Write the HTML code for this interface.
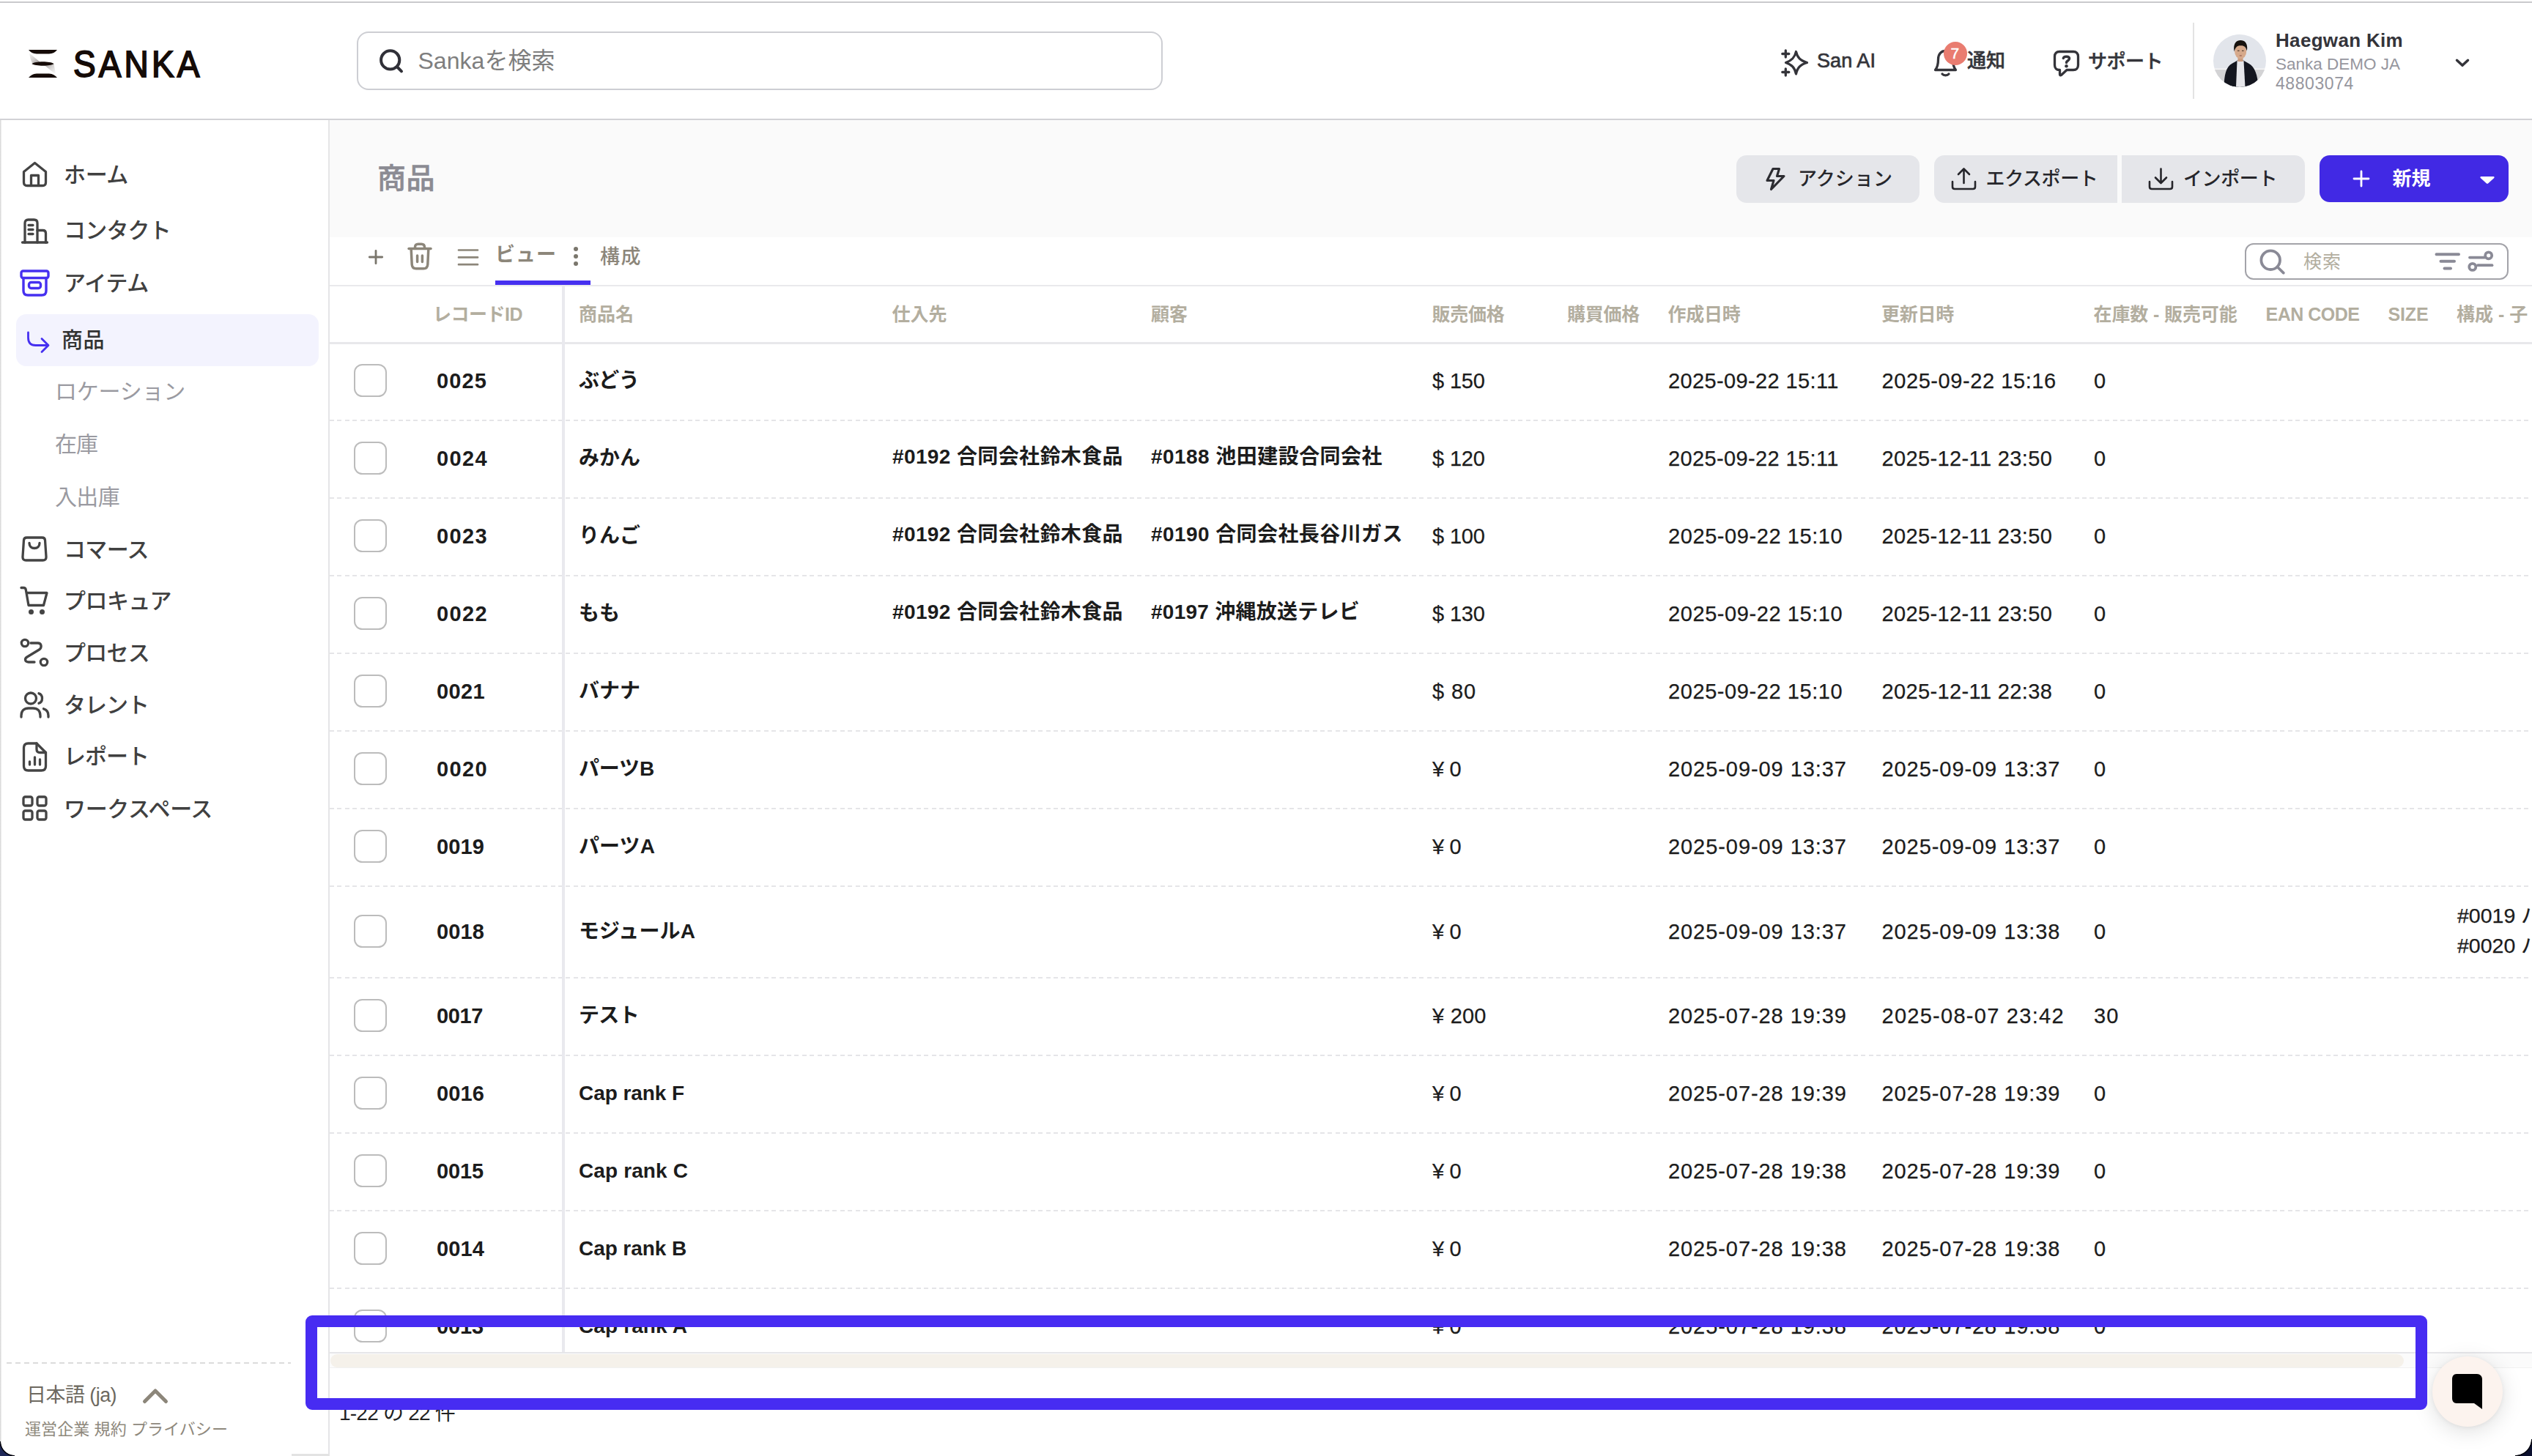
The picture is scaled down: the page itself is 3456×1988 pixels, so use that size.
<!DOCTYPE html>
<html lang="ja"><head><meta charset="utf-8"><title>商品 - Sanka</title>
<style>
html,body{margin:0;padding:0;}
body{width:3456px;height:1988px;position:relative;overflow:hidden;background:#fff;font-family:"Liberation Sans", "Noto Sans CJK JP", sans-serif;}
.b{position:absolute;box-sizing:border-box;}
.t{position:absolute;white-space:nowrap;line-height:1;}
svg{overflow:visible;}
</style></head><body>
<div class="b" style="left:0px;top:2px;width:3456px;height:2px;background:#c9c9cc;"></div>
<div class="b" style="left:450px;top:164px;width:3006px;height:160px;background:#fafafa;"></div>
<div class="b" style="left:0px;top:162px;width:3456px;height:2px;background:#d2d2d6;"></div>
<div class="b" style="left:448px;top:164px;width:2px;height:1824px;background:#e5e5e7;"></div>
<div class="b" style="left:0px;top:164px;width:2px;height:1824px;background:linear-gradient(90deg,#d4d4d4,#f2f2f2);"></div>
<svg class="b" style="left:39px;top:68px;" width="39" height="38" viewBox="0 0 39 38">
<defs><linearGradient id="lg1" x1="0" y1="0" x2="1" y2="1"><stop offset="0" stop-color="#f4f3f2"/><stop offset=".55" stop-color="#cfcccb"/><stop offset="1" stop-color="#8f8b89"/></linearGradient>
<linearGradient id="lg2" x1="0" y1="0" x2="1" y2="1"><stop offset="0" stop-color="#9f9b99"/><stop offset=".5" stop-color="#d9d7d6"/><stop offset="1" stop-color="#fbfbfb"/></linearGradient></defs>
<path d="M1 4.5 L16 17 L5 18.5 L2.5 12 Z" fill="url(#lg1)"/>
<path d="M21 20.5 L34.5 19.5 L37 32.5 L35 32 Z" fill="url(#lg2)"/>
<path d="M0 0 H39 C36.5 3.2 33 5.4 28 5.6 H11 C6 5.4 2.5 3.2 0 0Z" fill="#150b07"/>
<path d="M4.3 19 C10 15.2 29 15.2 34.7 19 C29 22.6 10 22.6 4.3 19Z" fill="#150b07"/>
<path d="M0 38 H39 C36.5 34.8 33 32.6 28 32.4 H11 C6 32.6 2.5 34.8 0 38Z" fill="#150b07"/>
</svg>
<div class="t" style="left:100px;top:63.0px;font-size:49.5px;color:#150b07;-webkit-text-stroke:1.8px #150b07;transform:scaleX(.93);transform-origin:0 50%;letter-spacing:4.4px;">SANKA</div>
<div class="b" style="left:487px;top:43px;width:1100px;height:80px;border:2px solid #cdced3;border-radius:16px;background:#fff;"></div>
<svg class="b" style="left:516px;top:66px;" width="36" height="36" viewBox="0 0 36 36"><circle cx="16.7" cy="15.9" r="12.6" fill="none" stroke="#303038" stroke-width="4"/><path d="M25.8 25 L32 31.3" stroke="#303038" stroke-width="4" stroke-linecap="round"/></svg>
<div class="t" style="left:570.5px;top:67.0px;font-size:32px;color:#7e7e7e;letter-spacing:0.03px;">Sankaを検索</div>
<svg class="b" style="left:2432px;top:66px;" width="38" height="40" viewBox="0 0 38 40"><g fill="none" stroke="#34343a" stroke-width="3.3" stroke-linecap="round" stroke-linejoin="round">
<path d="M19.5 4.5 C21.3 12.5 25 16.7 34.5 19.5 C25 22.3 21.3 26.5 19.5 35 C17.7 26.5 14 22.3 5.5 19.5 C14 16.7 17.7 12.5 19.5 4.5Z"/>
<path d="M5.3 3 V12 M.8 7.5 H9.8"/><path d="M5.3 28 V37 M.8 32.5 H9.8"/></g></svg>
<div class="t" style="left:2480px;top:70.0px;font-size:27px;font-weight:500;color:#34343a;letter-spacing:0.07px;-webkit-text-stroke:.7px #34343a;">San AI</div>
<svg class="b" style="left:2638px;top:66px;" width="36" height="40" viewBox="0 0 36 40"><g fill="none" stroke="#34343a" stroke-width="3.3" stroke-linecap="round" stroke-linejoin="round">
<path d="M3.5 29.5 C6.5 26 7.5 23 7.5 15 C7.5 7.5 12 3.5 17.5 3.5 C23 3.5 27.5 7.5 27.5 15 C27.5 23 28.5 26 31.5 29.5 Z"/>
<path d="M13 35 C15 37.5 20 37.5 22 35"/></g></svg>
<div class="b" style="left:2652.5px;top:56.5px;width:32px;height:32px;border-radius:50%;background:#e97c70;"></div>
<div class="t" style="left:2662.5px;top:62.0px;font-size:21px;color:#fff;-webkit-text-stroke:.5px #fff;">7</div>
<div class="t" style="left:2685px;top:70.0px;font-size:26px;font-weight:500;color:#34343a;letter-spacing:-0.01px;-webkit-text-stroke:.5px #34343a;">通知</div>
<svg class="b" style="left:2802px;top:68px;" width="37" height="38" viewBox="0 0 37 38"><g fill="none" stroke="#34343a" stroke-width="3.3" stroke-linecap="round" stroke-linejoin="round">
<path d="M9 2.5 H28 C32 2.5 34.5 5 34.5 9 V21 C34.5 25 32 27.5 28 27.5 H19 L11.5 34.5 C10.5 35.3 9.5 34.8 9.5 33.5 V27.5 H9 C5 27.5 2.5 25 2.5 21 V9 C2.5 5 5 2.5 9 2.5Z"/>
<path d="M14.3 11.5 C14.8 8.5 22.5 8 22.5 12 C22.5 15 18.5 14.8 18.5 17.4" stroke-width="3.5"/></g><circle cx="18.5" cy="22.3" r="2.3" fill="#34343a"/></svg>
<div class="t" style="left:2850px;top:70.5px;font-size:26px;font-weight:500;color:#34343a;letter-spacing:-0.50px;-webkit-text-stroke:.5px #34343a;">サポート</div>
<div class="b" style="left:2993px;top:31px;width:2px;height:104px;background:#e3e3e3;"></div>
<svg class="b" style="left:3021px;top:47px;" width="72" height="72" viewBox="0 0 72 72"><defs><clipPath id="av"><circle cx="36" cy="36" r="36"/></clipPath></defs>
<g clip-path="url(#av)"><rect width="72" height="72" fill="#e2e5eb"/><rect y="48" width="72" height="24" fill="#d3d3d5"/><rect y="46.5" width="72" height="1.6" fill="#f6f6f6"/>
<path d="M14.5 72 C15 56 17 44 26 39.5 L33 35.5 H41 L48 39.5 C57 44 60.5 56 61.5 72Z" fill="#14161f"/>
<path d="M32.5 36 H41.5 L43.5 72 H31Z" fill="#e6e6ea"/>
<rect x="33.5" y="29" width="7" height="8" fill="#c99a7d"/>
<ellipse cx="37.2" cy="23.5" rx="8" ry="10" fill="#d6a98b"/>
<path d="M28.6 23.5 C26.5 13 31.5 7.5 37.5 8 C44 8 47.5 13.5 45.8 22.5 C44.5 17.5 42 15 37.5 15.3 C33 15 30 17.5 28.6 23.5Z" fill="#17130f"/>
<path d="M33 22.3 H35.6 M39 22.3 H41.6" stroke="#3a2a22" stroke-width="1"/><path d="M35.8 29 H38.8" stroke="#8a4f45" stroke-width="1.2"/>
</g></svg>
<div class="t" style="left:3106px;top:42.0px;font-size:26px;font-weight:700;color:#34343a;letter-spacing:0.32px;">Haegwan Kim</div>
<div class="t" style="left:3106px;top:77.3px;font-size:22.5px;color:#96969e;">Sanka DEMO JA</div>
<div class="t" style="left:3106px;top:103.2px;font-size:23px;color:#96969e;letter-spacing:0.58px;">48803074</div>
<svg class="b" style="left:3351px;top:79px;" width="20" height="14" viewBox="0 0 24 16"><path d="M3 3.5 L12 12 L21 3.5" fill="none" stroke="#34343a" stroke-width="4.2" stroke-linecap="round" stroke-linejoin="round"/></svg>
<div class="t" style="left:515px;top:223.5px;font-size:39px;font-weight:500;color:#8b8b93;letter-spacing:0.49px;-webkit-text-stroke:.6px #8b8b93;">商品</div>
<div class="b" style="left:2370px;top:212px;width:250px;height:65px;background:#e5e6ea;border-radius:14px;"></div>
<svg class="b" style="left:2409px;top:228px;" width="29" height="33" viewBox="0 0 29 33"><path d="M11 2.5 H19.5 L16.5 12.5 H26 L8.5 30.5 L12 18.5 H3 Z" fill="none" stroke="#2c2c31" stroke-width="3.1" stroke-linejoin="round"/></svg>
<div class="t" style="left:2454px;top:231.0px;font-size:26px;font-weight:500;color:#26262b;letter-spacing:0.06px;">アクション</div>
<div class="b" style="left:2640px;top:212px;width:250px;height:65px;background:#e5e6ea;border-radius:14px 0 0 14px;"></div>
<svg class="b" style="left:2663px;top:228px;" width="35" height="32" viewBox="0 0 35 32"><g fill="none" stroke="#26262b" stroke-width="2.6" stroke-linecap="round" stroke-linejoin="round"><path d="M2 20 V27 C2 28.7 3.3 30 5 30 H30 C31.7 30 33 28.7 33 27 V20"/><path d="M17.5 22 V3 M10 10 L17.5 2.5 L25 10"/></g></svg>
<div class="t" style="left:2710.5px;top:231.0px;font-size:26px;font-weight:500;color:#26262b;letter-spacing:-0.37px;">エクスポート</div>
<div class="b" style="left:2896px;top:212px;width:250px;height:65px;background:#e5e6ea;border-radius:0 14px 14px 0;"></div>
<svg class="b" style="left:2932px;top:228px;" width="35" height="32" viewBox="0 0 35 32"><g fill="none" stroke="#26262b" stroke-width="2.6" stroke-linecap="round" stroke-linejoin="round"><path d="M2 20 V27 C2 28.7 3.3 30 5 30 H30 C31.7 30 33 28.7 33 27 V20"/><path d="M17.5 2.5 V21.5 M10 14.5 L17.5 22 L25 14.5"/></g></svg>
<div class="t" style="left:2980px;top:231.0px;font-size:26px;font-weight:500;color:#26262b;letter-spacing:-0.40px;">インポート</div>
<div class="b" style="left:3166px;top:212px;width:258px;height:64px;background:#4129e4;border-radius:14px;"></div>
<svg class="b" style="left:3212px;top:233px;" width="22" height="22" viewBox="0 0 22 22"><path d="M11 1 V21 M1 11 H21" stroke="#fff" stroke-width="2.8" stroke-linecap="round"/></svg>
<div class="t" style="left:3265.5px;top:231.0px;font-size:26px;font-weight:700;color:#fff;letter-spacing:-0.01px;">新規</div>
<svg class="b" style="left:3384px;top:239px;" width="22" height="13" viewBox="0 0 22 12"><path d="M2.5 1.5 H19.5 C20.6 1.5 21 2.6 20.3 3.4 L12.3 10.8 C11.6 11.5 10.4 11.5 9.7 10.8 L1.7 3.4 C1 2.6 1.4 1.5 2.5 1.5Z" fill="#fff"/></svg>
<svg class="b" style="left:502px;top:340px;" width="22" height="22" viewBox="0 0 22 22"><path d="M11 2.3 V19.7 M2.3 11 H19.7" stroke="#7a766c" stroke-width="2.8" stroke-linecap="round"/></svg>
<svg class="b" style="left:556px;top:331px;" width="34" height="38" viewBox="0 0 34 38"><g fill="none" stroke="#8c867a" stroke-width="3.5" stroke-linecap="round" stroke-linejoin="round">
<path d="M2 8.5 H32"/><path d="M10.5 8 V6.5 C10.5 3.8 12 2.2 14.8 2.2 H19.2 C22 2.2 23.5 3.8 23.5 6.5 V8"/>
<path d="M5.2 9 L6.2 30 C6.4 33.8 8.3 35.8 12 35.8 H22 C25.7 35.8 27.6 33.8 27.8 30 L28.8 9"/><path d="M13.6 18 V26.5 M20.4 18 V26.5"/></g></svg>
<svg class="b" style="left:625px;top:340px;" width="28" height="23" viewBox="0 0 28 23"><path d="M1 1.5 H27 M1 11.4 H27 M1 21.2 H27" stroke="#8c867a" stroke-width="2.7" stroke-linecap="round"/></svg>
<div class="t" style="left:676px;top:334.8px;font-size:27px;font-weight:700;color:#8c867a;letter-spacing:1.00px;">ビュー</div>
<div class="b" style="left:783px;top:337px;width:6px;height:6px;border-radius:50%;background:#7a766c;"></div>
<div class="b" style="left:783px;top:347.2px;width:6px;height:6px;border-radius:50%;background:#7a766c;"></div>
<div class="b" style="left:783px;top:357.4px;width:6px;height:6px;border-radius:50%;background:#7a766c;"></div>
<div class="t" style="left:819px;top:337.8px;font-size:27px;font-weight:500;color:#8c867a;letter-spacing:1.50px;">構成</div>
<div class="b" style="left:676px;top:383px;width:130px;height:6px;background:#4630f0;"></div>
<div class="b" style="left:450px;top:389px;width:3006px;height:2px;background:#e9e9ec;"></div>
<div class="b" style="left:3064px;top:332px;width:360px;height:50px;border:2px solid #a3a3a9;border-radius:12px;background:#fff;"></div>
<svg class="b" style="left:3084px;top:340px;" width="36" height="36" viewBox="0 0 36 36"><circle cx="15.2" cy="15.2" r="12.8" fill="none" stroke="#8a8a96" stroke-width="3.8"/><path d="M24.5 24.5 L32.8 32.6" stroke="#8a8a96" stroke-width="3.8" stroke-linecap="round"/></svg>
<div class="t" style="left:3144px;top:344.5px;font-size:25px;color:#b3ae9f;letter-spacing:0.99px;">検索</div>
<svg class="b" style="left:3323px;top:343px;" width="36" height="28" viewBox="0 0 36 28"><path d="M2.5 4.2 H33 M8.5 13.8 H27 M13.5 23.5 H22" stroke="#8a8a96" stroke-width="4" stroke-linecap="round"/></svg>
<svg class="b" style="left:3368px;top:341px;" width="36" height="30" viewBox="0 0 36 30"><g fill="none" stroke="#8a8a96" stroke-width="3.8" stroke-linecap="round"><path d="M3 10.6 H23.5"/><circle cx="28.7" cy="7.8" r="4.5"/><path d="M14 21.2 H33.5"/><circle cx="6.8" cy="23.4" r="4.5"/></g></svg>
<div class="b" style="left:450px;top:391px;width:3006px;height:1456px;background:#fff;"></div>
<div class="t" style="left:591px;top:416.5px;font-size:25px;font-weight:700;color:#b3ae9f;letter-spacing:-0.50px;">レコードID</div>
<div class="t" style="left:790px;top:416.5px;font-size:25px;font-weight:700;color:#b3ae9f;letter-spacing:-0.01px;">商品名</div>
<div class="t" style="left:1217.5px;top:416.5px;font-size:25px;font-weight:700;color:#b3ae9f;letter-spacing:-0.01px;">仕入先</div>
<div class="t" style="left:1571px;top:416.5px;font-size:25px;font-weight:700;color:#b3ae9f;letter-spacing:-0.01px;">顧客</div>
<div class="t" style="left:1954.5px;top:416.5px;font-size:25px;font-weight:700;color:#b3ae9f;letter-spacing:-0.25px;">販売価格</div>
<div class="t" style="left:2139px;top:416.5px;font-size:25px;font-weight:700;color:#b3ae9f;letter-spacing:-0.25px;">購買価格</div>
<div class="t" style="left:2276.5px;top:416.5px;font-size:25px;font-weight:700;color:#b3ae9f;letter-spacing:-0.25px;">作成日時</div>
<div class="t" style="left:2568px;top:416.5px;font-size:25px;font-weight:700;color:#b3ae9f;letter-spacing:-0.25px;">更新日時</div>
<div class="t" style="left:2857.5px;top:416.5px;font-size:25px;font-weight:700;color:#b3ae9f;letter-spacing:-0.12px;">在庫数 - 販売可能</div>
<div class="t" style="left:3092.5px;top:416.5px;font-size:25px;font-weight:700;color:#b3ae9f;letter-spacing:-0.50px;">EAN CODE</div>
<div class="t" style="left:3259.5px;top:416.5px;font-size:25px;font-weight:700;color:#b3ae9f;letter-spacing:-0.14px;">SIZE</div>
<div class="t" style="left:3353px;top:416.5px;font-size:25px;font-weight:700;color:#b3ae9f;">構成 - 子</div>
<div class="b" style="left:450px;top:467px;width:3006px;height:3px;background:#e8e8eb;"></div>
<div class="b" style="left:450px;top:469px;width:3006px;height:1378px;overflow:hidden;"><div class="b" style="left:-450px;top:-469px;width:3456px;height:1988px;">
<div class="b" style="left:483px;top:497.0px;width:45px;height:45px;border:2px solid #bcbcbc;border-radius:11.5px;background:#fff;"></div>
<div class="t" style="left:596px;top:506.3px;font-size:29px;font-weight:700;color:#1c1c1c;letter-spacing:1.12px;">0025</div>
<div class="t" style="left:790px;top:506.2px;font-size:28px;font-weight:700;color:#1c1c1c;letter-spacing:-0.67px;">ぶどう</div>
<div class="t" style="left:1955px;top:506.0px;font-size:29px;color:#1c1c1c;letter-spacing:-0.15px;-webkit-text-stroke:.25px #1c1c1c;">$ 150</div>
<div class="t" style="left:2277px;top:506.0px;font-size:29px;color:#1c1c1c;letter-spacing:0.37px;-webkit-text-stroke:.25px #1c1c1c;">2025-09-22 15:11</div>
<div class="t" style="left:2568.5px;top:506.0px;font-size:29px;color:#1c1c1c;letter-spacing:0.58px;-webkit-text-stroke:.25px #1c1c1c;">2025-09-22 15:16</div>
<div class="t" style="left:2858px;top:506.0px;font-size:29px;color:#1c1c1c;letter-spacing:1.17px;-webkit-text-stroke:.25px #1c1c1c;">0</div>
<div class="b" style="left:450px;top:573px;width:3006px;height:2px;background:repeating-linear-gradient(90deg,#e5e5e8 0 6px,transparent 6px 10.4px);"></div>
<div class="b" style="left:483px;top:603.0px;width:45px;height:45px;border:2px solid #bcbcbc;border-radius:11.5px;background:#fff;"></div>
<div class="t" style="left:596px;top:612.3px;font-size:29px;font-weight:700;color:#1c1c1c;letter-spacing:1.37px;">0024</div>
<div class="t" style="left:790px;top:612.2px;font-size:28px;font-weight:700;color:#1c1c1c;">みかん</div>
<div class="t" style="left:1218px;top:609.5px;font-size:28px;font-weight:700;color:#1c1c1c;letter-spacing:0.38px;">#0192 合同会社鈴木食品</div>
<div class="t" style="left:1571px;top:609.5px;font-size:28px;font-weight:700;color:#1c1c1c;letter-spacing:0.45px;">#0188 池田建設合同会社</div>
<div class="t" style="left:1955px;top:612.0px;font-size:29px;color:#1c1c1c;letter-spacing:-0.15px;-webkit-text-stroke:.25px #1c1c1c;">$ 120</div>
<div class="t" style="left:2277px;top:612.0px;font-size:29px;color:#1c1c1c;letter-spacing:0.37px;-webkit-text-stroke:.25px #1c1c1c;">2025-09-22 15:11</div>
<div class="t" style="left:2568.5px;top:612.0px;font-size:29px;color:#1c1c1c;letter-spacing:0.37px;-webkit-text-stroke:.25px #1c1c1c;">2025-12-11 23:50</div>
<div class="t" style="left:2858px;top:612.0px;font-size:29px;color:#1c1c1c;letter-spacing:1.17px;-webkit-text-stroke:.25px #1c1c1c;">0</div>
<div class="b" style="left:450px;top:679px;width:3006px;height:2px;background:repeating-linear-gradient(90deg,#e5e5e8 0 6px,transparent 6px 10.4px);"></div>
<div class="b" style="left:483px;top:709.0px;width:45px;height:45px;border:2px solid #bcbcbc;border-radius:11.5px;background:#fff;"></div>
<div class="t" style="left:596px;top:718.3px;font-size:29px;font-weight:700;color:#1c1c1c;letter-spacing:1.37px;">0023</div>
<div class="t" style="left:790px;top:718.2px;font-size:28px;font-weight:700;color:#1c1c1c;">りんご</div>
<div class="t" style="left:1218px;top:715.5px;font-size:28px;font-weight:700;color:#1c1c1c;letter-spacing:0.38px;">#0192 合同会社鈴木食品</div>
<div class="t" style="left:1571px;top:715.5px;font-size:28px;font-weight:700;color:#1c1c1c;letter-spacing:0.42px;">#0190 合同会社長谷川ガス</div>
<div class="t" style="left:1955px;top:718.0px;font-size:29px;color:#1c1c1c;letter-spacing:-0.15px;-webkit-text-stroke:.25px #1c1c1c;">$ 100</div>
<div class="t" style="left:2277px;top:718.0px;font-size:29px;color:#1c1c1c;letter-spacing:0.58px;-webkit-text-stroke:.25px #1c1c1c;">2025-09-22 15:10</div>
<div class="t" style="left:2568.5px;top:718.0px;font-size:29px;color:#1c1c1c;letter-spacing:0.37px;-webkit-text-stroke:.25px #1c1c1c;">2025-12-11 23:50</div>
<div class="t" style="left:2858px;top:718.0px;font-size:29px;color:#1c1c1c;letter-spacing:1.17px;-webkit-text-stroke:.25px #1c1c1c;">0</div>
<div class="b" style="left:450px;top:785px;width:3006px;height:2px;background:repeating-linear-gradient(90deg,#e5e5e8 0 6px,transparent 6px 10.4px);"></div>
<div class="b" style="left:483px;top:815.0px;width:45px;height:45px;border:2px solid #bcbcbc;border-radius:11.5px;background:#fff;"></div>
<div class="t" style="left:596px;top:824.3px;font-size:29px;font-weight:700;color:#1c1c1c;letter-spacing:1.37px;">0022</div>
<div class="t" style="left:790px;top:824.2px;font-size:28px;font-weight:700;color:#1c1c1c;">もも</div>
<div class="t" style="left:1218px;top:821.5px;font-size:28px;font-weight:700;color:#1c1c1c;letter-spacing:0.38px;">#0192 合同会社鈴木食品</div>
<div class="t" style="left:1571px;top:821.5px;font-size:28px;font-weight:700;color:#1c1c1c;letter-spacing:0.26px;">#0197 沖縄放送テレビ</div>
<div class="t" style="left:1955px;top:824.0px;font-size:29px;color:#1c1c1c;letter-spacing:-0.15px;-webkit-text-stroke:.25px #1c1c1c;">$ 130</div>
<div class="t" style="left:2277px;top:824.0px;font-size:29px;color:#1c1c1c;letter-spacing:0.58px;-webkit-text-stroke:.25px #1c1c1c;">2025-09-22 15:10</div>
<div class="t" style="left:2568.5px;top:824.0px;font-size:29px;color:#1c1c1c;letter-spacing:0.37px;-webkit-text-stroke:.25px #1c1c1c;">2025-12-11 23:50</div>
<div class="t" style="left:2858px;top:824.0px;font-size:29px;color:#1c1c1c;letter-spacing:1.17px;-webkit-text-stroke:.25px #1c1c1c;">0</div>
<div class="b" style="left:450px;top:891px;width:3006px;height:2px;background:repeating-linear-gradient(90deg,#e5e5e8 0 6px,transparent 6px 10.4px);"></div>
<div class="b" style="left:483px;top:921.0px;width:45px;height:45px;border:2px solid #bcbcbc;border-radius:11.5px;background:#fff;"></div>
<div class="t" style="left:596px;top:930.3px;font-size:29px;font-weight:700;color:#1c1c1c;letter-spacing:0.37px;">0021</div>
<div class="t" style="left:790px;top:930.2px;font-size:28px;font-weight:700;color:#1c1c1c;">バナナ</div>
<div class="t" style="left:1955px;top:930.0px;font-size:29px;color:#1c1c1c;letter-spacing:0.91px;-webkit-text-stroke:.25px #1c1c1c;">$ 80</div>
<div class="t" style="left:2277px;top:930.0px;font-size:29px;color:#1c1c1c;letter-spacing:0.58px;-webkit-text-stroke:.25px #1c1c1c;">2025-09-22 15:10</div>
<div class="t" style="left:2568.5px;top:930.0px;font-size:29px;color:#1c1c1c;letter-spacing:0.37px;-webkit-text-stroke:.25px #1c1c1c;">2025-12-11 22:38</div>
<div class="t" style="left:2858px;top:930.0px;font-size:29px;color:#1c1c1c;letter-spacing:1.17px;-webkit-text-stroke:.25px #1c1c1c;">0</div>
<div class="b" style="left:450px;top:997px;width:3006px;height:2px;background:repeating-linear-gradient(90deg,#e5e5e8 0 6px,transparent 6px 10.4px);"></div>
<div class="b" style="left:483px;top:1027.0px;width:45px;height:45px;border:2px solid #bcbcbc;border-radius:11.5px;background:#fff;"></div>
<div class="t" style="left:596px;top:1036.3px;font-size:29px;font-weight:700;color:#1c1c1c;letter-spacing:1.37px;">0020</div>
<div class="t" style="left:790px;top:1036.2px;font-size:28px;font-weight:700;color:#1c1c1c;letter-spacing:-0.17px;">パーツB</div>
<div class="t" style="left:1955px;top:1036.0px;font-size:29px;color:#1c1c1c;letter-spacing:-0.39px;-webkit-text-stroke:.25px #1c1c1c;">¥ 0</div>
<div class="t" style="left:2277px;top:1036.0px;font-size:29px;color:#1c1c1c;letter-spacing:0.93px;-webkit-text-stroke:.25px #1c1c1c;">2025-09-09 13:37</div>
<div class="t" style="left:2568.5px;top:1036.0px;font-size:29px;color:#1c1c1c;letter-spacing:0.93px;-webkit-text-stroke:.25px #1c1c1c;">2025-09-09 13:37</div>
<div class="t" style="left:2858px;top:1036.0px;font-size:29px;color:#1c1c1c;letter-spacing:1.17px;-webkit-text-stroke:.25px #1c1c1c;">0</div>
<div class="b" style="left:450px;top:1103px;width:3006px;height:2px;background:repeating-linear-gradient(90deg,#e5e5e8 0 6px,transparent 6px 10.4px);"></div>
<div class="b" style="left:483px;top:1133.0px;width:45px;height:45px;border:2px solid #bcbcbc;border-radius:11.5px;background:#fff;"></div>
<div class="t" style="left:596px;top:1142.3px;font-size:29px;font-weight:700;color:#1c1c1c;letter-spacing:0.12px;">0019</div>
<div class="t" style="left:790px;top:1142.2px;font-size:28px;font-weight:700;color:#1c1c1c;letter-spacing:0.08px;">パーツA</div>
<div class="t" style="left:1955px;top:1142.0px;font-size:29px;color:#1c1c1c;letter-spacing:-0.39px;-webkit-text-stroke:.25px #1c1c1c;">¥ 0</div>
<div class="t" style="left:2277px;top:1142.0px;font-size:29px;color:#1c1c1c;letter-spacing:0.93px;-webkit-text-stroke:.25px #1c1c1c;">2025-09-09 13:37</div>
<div class="t" style="left:2568.5px;top:1142.0px;font-size:29px;color:#1c1c1c;letter-spacing:0.93px;-webkit-text-stroke:.25px #1c1c1c;">2025-09-09 13:37</div>
<div class="t" style="left:2858px;top:1142.0px;font-size:29px;color:#1c1c1c;letter-spacing:1.17px;-webkit-text-stroke:.25px #1c1c1c;">0</div>
<div class="b" style="left:450px;top:1209px;width:3006px;height:2px;background:repeating-linear-gradient(90deg,#e5e5e8 0 6px,transparent 6px 10.4px);"></div>
<div class="b" style="left:483px;top:1248.5px;width:45px;height:45px;border:2px solid #bcbcbc;border-radius:11.5px;background:#fff;"></div>
<div class="t" style="left:596px;top:1257.8px;font-size:29px;font-weight:700;color:#1c1c1c;letter-spacing:0.12px;">0018</div>
<div class="t" style="left:790px;top:1257.7px;font-size:28px;font-weight:700;color:#1c1c1c;letter-spacing:0.12px;">モジュールA</div>
<div class="t" style="left:1955px;top:1257.5px;font-size:29px;color:#1c1c1c;letter-spacing:-0.39px;-webkit-text-stroke:.25px #1c1c1c;">¥ 0</div>
<div class="t" style="left:2277px;top:1257.5px;font-size:29px;color:#1c1c1c;letter-spacing:0.93px;-webkit-text-stroke:.25px #1c1c1c;">2025-09-09 13:37</div>
<div class="t" style="left:2568.5px;top:1257.5px;font-size:29px;color:#1c1c1c;letter-spacing:0.93px;-webkit-text-stroke:.25px #1c1c1c;">2025-09-09 13:38</div>
<div class="t" style="left:2858px;top:1257.5px;font-size:29px;color:#1c1c1c;letter-spacing:1.17px;-webkit-text-stroke:.25px #1c1c1c;">0</div>
<div class="t" style="left:3354px;top:1236.0px;font-size:28.5px;color:#1c1c1c;-webkit-text-stroke:.25px #1c1c1c;">#0019 パーツA</div>
<div class="t" style="left:3354px;top:1277.0px;font-size:28.5px;color:#1c1c1c;-webkit-text-stroke:.25px #1c1c1c;">#0020 パーツB</div>
<div class="b" style="left:450px;top:1334px;width:3006px;height:2px;background:repeating-linear-gradient(90deg,#e5e5e8 0 6px,transparent 6px 10.4px);"></div>
<div class="b" style="left:483px;top:1364.0px;width:45px;height:45px;border:2px solid #bcbcbc;border-radius:11.5px;background:#fff;"></div>
<div class="t" style="left:596px;top:1373.3px;font-size:29px;font-weight:700;color:#1c1c1c;letter-spacing:-0.38px;">0017</div>
<div class="t" style="left:790px;top:1373.2px;font-size:28px;font-weight:700;color:#1c1c1c;letter-spacing:-0.67px;">テスト</div>
<div class="t" style="left:1955px;top:1373.0px;font-size:29px;color:#1c1c1c;letter-spacing:0.23px;-webkit-text-stroke:.25px #1c1c1c;">¥ 200</div>
<div class="t" style="left:2277px;top:1373.0px;font-size:29px;color:#1c1c1c;letter-spacing:0.93px;-webkit-text-stroke:.25px #1c1c1c;">2025-07-28 19:39</div>
<div class="t" style="left:2568.5px;top:1373.0px;font-size:29px;color:#1c1c1c;letter-spacing:1.27px;-webkit-text-stroke:.25px #1c1c1c;">2025-08-07 23:42</div>
<div class="t" style="left:2858px;top:1373.0px;font-size:29px;color:#1c1c1c;letter-spacing:1.17px;-webkit-text-stroke:.25px #1c1c1c;">30</div>
<div class="b" style="left:450px;top:1440px;width:3006px;height:2px;background:repeating-linear-gradient(90deg,#e5e5e8 0 6px,transparent 6px 10.4px);"></div>
<div class="b" style="left:483px;top:1470.0px;width:45px;height:45px;border:2px solid #bcbcbc;border-radius:11.5px;background:#fff;"></div>
<div class="t" style="left:596px;top:1479.3px;font-size:29px;font-weight:700;color:#1c1c1c;letter-spacing:0.12px;">0016</div>
<div class="t" style="left:790px;top:1479.2px;font-size:28px;font-weight:700;color:#1c1c1c;letter-spacing:-0.07px;">Cap rank F</div>
<div class="t" style="left:1955px;top:1479.0px;font-size:29px;color:#1c1c1c;letter-spacing:-0.39px;-webkit-text-stroke:.25px #1c1c1c;">¥ 0</div>
<div class="t" style="left:2277px;top:1479.0px;font-size:29px;color:#1c1c1c;letter-spacing:0.93px;-webkit-text-stroke:.25px #1c1c1c;">2025-07-28 19:39</div>
<div class="t" style="left:2568.5px;top:1479.0px;font-size:29px;color:#1c1c1c;letter-spacing:0.93px;-webkit-text-stroke:.25px #1c1c1c;">2025-07-28 19:39</div>
<div class="t" style="left:2858px;top:1479.0px;font-size:29px;color:#1c1c1c;letter-spacing:1.17px;-webkit-text-stroke:.25px #1c1c1c;">0</div>
<div class="b" style="left:450px;top:1546px;width:3006px;height:2px;background:repeating-linear-gradient(90deg,#e5e5e8 0 6px,transparent 6px 10.4px);"></div>
<div class="b" style="left:483px;top:1576.0px;width:45px;height:45px;border:2px solid #bcbcbc;border-radius:11.5px;background:#fff;"></div>
<div class="t" style="left:596px;top:1585.3px;font-size:29px;font-weight:700;color:#1c1c1c;letter-spacing:-0.13px;">0015</div>
<div class="t" style="left:790px;top:1585.2px;font-size:28px;font-weight:700;color:#1c1c1c;letter-spacing:0.12px;">Cap rank C</div>
<div class="t" style="left:1955px;top:1585.0px;font-size:29px;color:#1c1c1c;letter-spacing:-0.39px;-webkit-text-stroke:.25px #1c1c1c;">¥ 0</div>
<div class="t" style="left:2277px;top:1585.0px;font-size:29px;color:#1c1c1c;letter-spacing:0.93px;-webkit-text-stroke:.25px #1c1c1c;">2025-07-28 19:38</div>
<div class="t" style="left:2568.5px;top:1585.0px;font-size:29px;color:#1c1c1c;letter-spacing:0.93px;-webkit-text-stroke:.25px #1c1c1c;">2025-07-28 19:39</div>
<div class="t" style="left:2858px;top:1585.0px;font-size:29px;color:#1c1c1c;letter-spacing:1.17px;-webkit-text-stroke:.25px #1c1c1c;">0</div>
<div class="b" style="left:450px;top:1652px;width:3006px;height:2px;background:repeating-linear-gradient(90deg,#e5e5e8 0 6px,transparent 6px 10.4px);"></div>
<div class="b" style="left:483px;top:1682.0px;width:45px;height:45px;border:2px solid #bcbcbc;border-radius:11.5px;background:#fff;"></div>
<div class="t" style="left:596px;top:1691.3px;font-size:29px;font-weight:700;color:#1c1c1c;letter-spacing:0.12px;">0014</div>
<div class="t" style="left:790px;top:1691.2px;font-size:28px;font-weight:700;color:#1c1c1c;letter-spacing:-0.08px;">Cap rank B</div>
<div class="t" style="left:1955px;top:1691.0px;font-size:29px;color:#1c1c1c;letter-spacing:-0.39px;-webkit-text-stroke:.25px #1c1c1c;">¥ 0</div>
<div class="t" style="left:2277px;top:1691.0px;font-size:29px;color:#1c1c1c;letter-spacing:0.93px;-webkit-text-stroke:.25px #1c1c1c;">2025-07-28 19:38</div>
<div class="t" style="left:2568.5px;top:1691.0px;font-size:29px;color:#1c1c1c;letter-spacing:0.93px;-webkit-text-stroke:.25px #1c1c1c;">2025-07-28 19:38</div>
<div class="t" style="left:2858px;top:1691.0px;font-size:29px;color:#1c1c1c;letter-spacing:1.17px;-webkit-text-stroke:.25px #1c1c1c;">0</div>
<div class="b" style="left:450px;top:1758px;width:3006px;height:2px;background:repeating-linear-gradient(90deg,#e5e5e8 0 6px,transparent 6px 10.4px);"></div>
<div class="b" style="left:483px;top:1788.0px;width:45px;height:45px;border:2px solid #bcbcbc;border-radius:11.5px;background:#fff;"></div>
<div class="t" style="left:596px;top:1797.3px;font-size:29px;font-weight:700;color:#1c1c1c;letter-spacing:-0.13px;">0013</div>
<div class="t" style="left:790px;top:1797.2px;font-size:28px;font-weight:700;color:#1c1c1c;letter-spacing:0.12px;">Cap rank A</div>
<div class="t" style="left:1955px;top:1797.0px;font-size:29px;color:#1c1c1c;letter-spacing:-0.39px;-webkit-text-stroke:.25px #1c1c1c;">¥ 0</div>
<div class="t" style="left:2277px;top:1797.0px;font-size:29px;color:#1c1c1c;letter-spacing:0.93px;-webkit-text-stroke:.25px #1c1c1c;">2025-07-28 19:38</div>
<div class="t" style="left:2568.5px;top:1797.0px;font-size:29px;color:#1c1c1c;letter-spacing:0.93px;-webkit-text-stroke:.25px #1c1c1c;">2025-07-28 19:38</div>
<div class="t" style="left:2858px;top:1797.0px;font-size:29px;color:#1c1c1c;letter-spacing:1.17px;-webkit-text-stroke:.25px #1c1c1c;">0</div>
<div class="b" style="left:450px;top:1864px;width:3006px;height:2px;background:repeating-linear-gradient(90deg,#e5e5e8 0 6px,transparent 6px 10.4px);"></div>
</div></div>
<div class="b" style="left:767px;top:390px;width:4px;height:1457px;background:#e9e9ee;"></div>
<div class="b" style="left:450px;top:1846px;width:3006px;height:2px;background:#e6e6e9;"></div>
<div class="b" style="left:450px;top:1848px;width:3006px;height:20px;background:#fbfbfb;border-bottom:1px solid #f1f1f1;"></div>
<div class="b" style="left:451px;top:1849px;width:2830px;height:18px;background:#f5f1ea;border-radius:9px;"></div>
<div class="t" style="left:463px;top:1916.0px;font-size:28px;color:#222;letter-spacing:-0.78px;">1-22 の 22 件</div>
<svg class="b" style="left:30px;top:220px;" width="35" height="36" viewBox="0 0 35 36"><g fill="none" stroke="#444" stroke-width="3.3" stroke-linecap="round" stroke-linejoin="round"><path d="M2.5 14.5 L17.5 2.5 L32.5 14.5 V29 C32.5 32 31 33.5 28 33.5 H7 C4 33.5 2.5 32 2.5 29 Z"/><path d="M12.5 33 V19.5 H22.5 V33"/></g></svg>
<div class="t" style="left:87px;top:223.8px;font-size:30px;font-weight:500;color:#404040;letter-spacing:-0.37px;">ホーム</div>
<svg class="b" style="left:29px;top:298px;" width="37" height="35" viewBox="0 0 37 35"><g fill="none" stroke="#444" stroke-width="3.3" stroke-linecap="round" stroke-linejoin="round"><path d="M1.5 33 H35.5"/><path d="M5 33 V6.5 C5 3.5 6.5 2 9.5 2 H17.5 C20.5 2 22 3.5 22 6.5 V33"/><path d="M22 16.5 H29.5 C32 16.5 33.5 18 33.5 20.5 V33"/><path d="M10 9.5 H16 M10 15.5 H16 M10 21.5 H16"/></g></svg>
<div class="t" style="left:87px;top:300.3px;font-size:30px;font-weight:500;color:#404040;letter-spacing:-0.80px;">コンタクト</div>
<svg class="b" style="left:27px;top:368px;" width="41" height="37" viewBox="0 0 41 37"><g fill="none" stroke="#4630f0" stroke-width="3.4" stroke-linecap="round" stroke-linejoin="round"><rect x="2" y="2" width="37" height="9.5" rx="2.5"/><path d="M5 11.5 V29 C5 33 7 35 11 35 H30 C34 35 36 33 36 29 V11.5"/><rect x="12.5" y="17.5" width="16" height="8" rx="3"/></g></svg>
<div class="t" style="left:87px;top:371.8px;font-size:30px;font-weight:500;color:#404040;letter-spacing:-0.25px;">アイテム</div>
<div class="b" style="left:22px;top:429px;width:413px;height:71px;background:#f3f3fe;border-radius:14px;"></div>
<svg class="b" style="left:35px;top:451px;" width="34" height="32" viewBox="0 0 34 32"><g fill="none" stroke="#4630f0" stroke-width="2.8" stroke-linecap="round" stroke-linejoin="round"><path d="M3.5 3 V10 C3.5 17 6.5 20.5 13.5 20.5 H30"/><path d="M22 11.5 L31 20.5 L22 29.5"/></g></svg>
<div class="t" style="left:84px;top:451.3px;font-size:29px;font-weight:500;color:#333;letter-spacing:0.49px;">商品</div>
<div class="t" style="left:75px;top:520.3px;font-size:30px;color:#9a9aa1;letter-spacing:-0.23px;">ロケーション</div>
<div class="t" style="left:75px;top:591.8px;font-size:30px;color:#9a9aa1;letter-spacing:-1.00px;">在庫</div>
<div class="t" style="left:75px;top:663.8px;font-size:30px;color:#9a9aa1;letter-spacing:-0.67px;">入出庫</div>
<svg class="b" style="left:29px;top:732px;" width="36" height="35" viewBox="0 0 36 35"><g fill="none" stroke="#444" stroke-width="3.3" stroke-linecap="round" stroke-linejoin="round"><path d="M7.5 2 H28.5 C31 2 32.3 3.3 32.5 5.5 L34 28 C34.2 31.5 32.5 33 29.5 33 H6.5 C3.5 33 1.8 31.5 2 28 L3.5 5.5 C3.7 3.3 5 2 7.5 2Z"/><path d="M11 9.5 C11 14 14 16.5 18 16.5 C22 16.5 25 14 25 9.5"/></g></svg>
<div class="t" style="left:87px;top:735.8px;font-size:30px;font-weight:500;color:#404040;letter-spacing:-0.63px;">コマース</div>
<svg class="b" style="left:27px;top:800px;" width="41" height="40" viewBox="0 0 41 40"><g fill="none" stroke="#444" stroke-width="3.3" stroke-linecap="round" stroke-linejoin="round"><path d="M2 2.5 H5 C7 2.5 8 3.5 8.3 5.2 L12 26.5 H32.5 L37 9.5 H9.5"/></g></svg>
<div class="b" style="left:39px;top:832px;width:7px;height:7px;border-radius:50%;background:#444;"></div>
<div class="b" style="left:54px;top:832px;width:7px;height:7px;border-radius:50%;background:#444;"></div>
<div class="t" style="left:87px;top:805.8px;font-size:30px;font-weight:500;color:#404040;letter-spacing:-0.48px;">プロキュア</div>
<svg class="b" style="left:27px;top:871px;" width="41" height="40" viewBox="0 0 41 40"><g fill="none" stroke="#444" stroke-width="3.3" stroke-linecap="round" stroke-linejoin="round"><circle cx="7" cy="7" r="4.7"/><circle cx="33" cy="33" r="4.7"/><path d="M15 7 H24.5 C30 7 30.5 13.5 26.5 16 L10 26 C6 28.5 7 33 12 33 H20"/></g></svg>
<div class="t" style="left:87px;top:876.8px;font-size:30px;font-weight:500;color:#404040;letter-spacing:-0.75px;">プロセス</div>
<svg class="b" style="left:27px;top:944px;" width="41" height="37" viewBox="0 0 41 37"><g fill="none" stroke="#444" stroke-width="3.3" stroke-linecap="round" stroke-linejoin="round"><circle cx="15" cy="9.5" r="7.5"/><path d="M2 35 V33 C2 26.5 6 23 12 23 H18 C24 23 28 26.5 28 33 V35"/><path d="M26 2.8 C32 4.5 32 14.5 26 16.2"/><path d="M32.5 23.8 C36.8 25 39 28.5 39 33 V35"/></g></svg>
<div class="t" style="left:87px;top:947.8px;font-size:30px;font-weight:500;color:#404040;letter-spacing:-1.00px;">タレント</div>
<svg class="b" style="left:30px;top:1013px;" width="35" height="41" viewBox="0 0 35 41"><g fill="none" stroke="#444" stroke-width="3.3" stroke-linecap="round" stroke-linejoin="round"><path d="M20 2 H8.5 C4.5 2 2.5 4 2.5 8 V33 C2.5 37 4.5 39 8.5 39 H26.5 C30.5 39 32.5 37 32.5 33 V14.5 Z"/><path d="M20 2 V10 C20 13 21.5 14.5 24.5 14.5 H32.5"/><path d="M10.5 31 V27 M17.5 31 V21 M24.5 31 V24"/></g></svg>
<div class="t" style="left:87px;top:1018.3px;font-size:30px;font-weight:500;color:#404040;letter-spacing:-1.00px;">レポート</div>
<svg class="b" style="left:30px;top:1086px;" width="35" height="35" viewBox="0 0 35 35"><g fill="none" stroke="#444" stroke-width="3.3" stroke-linecap="round" stroke-linejoin="round"><rect x="2" y="2" width="12" height="12" rx="2.5"/><rect x="21" y="2" width="12" height="12" rx="2.5"/><rect x="2" y="21" width="12" height="12" rx="2.5"/><rect x="21" y="21" width="12" height="12" rx="2.5"/></g></svg>
<div class="t" style="left:87px;top:1089.8px;font-size:30px;font-weight:500;color:#404040;letter-spacing:-0.36px;">ワークスペース</div>
<div class="b" style="left:9px;top:1860px;width:388px;height:2px;background:repeating-linear-gradient(90deg,#dcdcdc 0 7px,transparent 7px 12px);"></div>
<div class="t" style="left:36px;top:1892.2px;font-size:27px;color:#6d6960;letter-spacing:-0.56px;">日本語 (ja)</div>
<svg class="b" style="left:193px;top:1894px;" width="38" height="24" viewBox="0 0 38 24"><path d="M4.5 19.5 L19 5 L33.5 19.5" fill="none" stroke="#8c867a" stroke-width="5" stroke-linecap="round" stroke-linejoin="round"/></svg>
<div class="t" style="left:34px;top:1940.5px;font-size:22px;color:#8e887c;letter-spacing:0.09px;">運営企業 規約 プライバシー</div>
<div class="b" style="left:398px;top:1985px;width:51px;height:3px;background:#e3e3e3;"></div>
<div class="b" style="left:3320px;top:1852px;width:96px;height:96px;border-radius:50%;background:#fcf3ee;box-shadow:0 6px 30px rgba(0,0,0,.13),0 1px 6px rgba(0,0,0,.06);"></div>
<svg class="b" style="left:3346px;top:1875px;" width="44" height="50" viewBox="0 0 44 50"><path d="M7 1 H35 C39 1 42 4 42 8 V49 L31 41 H7 C3 41 1 38 1 34 V8 C1 4 3 1 7 1Z" fill="#000"/></svg>
<div class="b" style="left:0px;top:1968px;width:20px;height:20px;background:radial-gradient(circle at 100% 0,rgba(0,0,0,0) 18.5px,#05060f 19.2px,#05060f 20px,#1f2858 21px);"></div>
<div class="b" style="left:3433px;top:1965px;width:23px;height:23px;background:radial-gradient(circle at 0 0,rgba(0,0,0,0) 21.5px,#05060f 22.2px,#05060f 23px,#0b0f2e 24px);"></div>
<div class="b" style="left:417px;top:1796px;width:2896px;height:129px;border:16px solid #472cf2;border-radius:9px;"></div>
</body></html>
